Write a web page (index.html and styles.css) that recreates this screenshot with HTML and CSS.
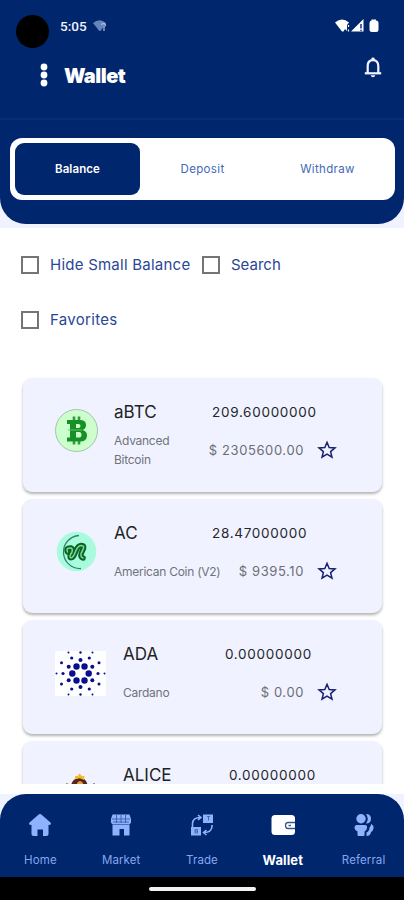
FILE: index.html
```html
<!DOCTYPE html>
<html lang="en">
<head>
    <meta charset="UTF-8">
    <meta name="viewport" content="width=device-width, initial-scale=1.0">
    <title>Wallet</title>
    <link rel="stylesheet" href="styles.css">
</head>
<body>
    <div class="app">
        <div class="header-wrap">
            <header class="header">
                <div class="topbar">
                    <div class="status">
                        <span class="camera"></span>
                        <span class="time">5:05</span>
                        <svg class="wifi-dim" width="15" height="13" viewBox="0 0 15 13">
                            <path d="M0 3Q6.500-2.500 13 3L8 10.500Q6.500 11.500 5.500 10Z" fill="#6484be"/>
                            <path d="M8.500 5Q8.500 3.500 10.300 3.500T12.500 5Q12.500 6 11 6.500V11" fill="none" stroke="#a3b6dc" stroke-width="1.300"/>
                        </svg>
                        <svg class="signals" width="44" height="14" viewBox="0 0 44 14">
                            <path d="M0 3.500Q7-2.500 14 3.500L12 6V12L10 10L8.500 12.500H7Z" fill="#fff"/>
                            <path d="M13.500 6V8M13.500 10.500V12.500" stroke="#fff" stroke-width="1.200"/>
                            <path d="M16 12.500L28.500 0V12.500Z" fill="#fff"/>
                            <path d="M26 5V9.500M26 10.700V12" stroke="#00266e" stroke-width="1.400"/>
                            <path d="M36.500 1.500V.500H41V1.500Q43.500 1.500 43.500 4V10.500Q43.500 13 41 13H37Q34.500 13 34.500 10.500V4Q34.500 1.500 36.500 1.500Z" fill="#fff"/>
                        </svg>
                    </div>
                    <div class="title-row">
                        <svg width="8" height="24" viewBox="0 0 8 24" fill="#fff">
                            <circle cx="4" cy="4" r="3.400"/>
                            <circle cx="4" cy="12" r="3.400"/>
                            <circle cx="4" cy="20" r="3.400"/>
                        </svg>
                        <h1>Wallet</h1>
                        <svg class="bell" width="18" height="21" viewBox="0 0 18 21">
                            <path d="M3.700 16V9Q3.700 3.200 9 3.200T14.300 9V16" fill="none" stroke="#f4f4ff" stroke-width="2.200"/>
                            <path d="M.800 16.300H17.200" stroke="#f4f4ff" stroke-width="2.200"/>
                            <path d="M7.300 3V1.800Q7.300.500 9 .500T10.700 1.800V3ZM6.800 18.200H11.200Q11 20.200 9 20.200T6.800 18.200Z" fill="#f4f4ff"/>
                        </svg>
                    </div>
                </div>
                <div class="tabs">
                    <button class="tab active">Balance</button>
                    <button class="tab">Deposit</button>
                    <button class="tab">Withdraw</button>
                </div>
            </header>
        </div>

        <div class="filters">
            <label><span class="box"></span><span class="hide-small">Hide Small Balance</span></label>
            <label><span class="box"></span><span class="search">Search</span></label>
            <label><span class="box"></span><span class="favorites">Favorites</span></label>
        </div>

        <main class="coins">
            <article class="card">
                <svg class="coin-icon" width="43" height="43" viewBox="0 0 43 43">
                    <circle cx="21.500" cy="21.500" r="21" fill="#ccffcb" stroke="#a5c2aa"/>
                    <path d="M12 11H25Q31 11 31 16Q31 20 27.500 21Q32 22 32 26.500Q32 32.500 25 32.500H12V28.500H15V15H12ZM21 15V19H23.500Q25.500 19 25.500 17T23.500 15ZM21 23V28.500H24Q26.500 28.500 26.500 25.700T24 23Z" fill="#159126" fill-rule="evenodd"/>
                    <path d="M19 11V7.500M24 11V7.500M19 32V35.500M24 32V35.500" stroke="#2e9c3c" stroke-width="2.600"/>
                    <path d="M13 21H27" stroke="#6abf70" stroke-width="1"/>
                </svg>
                <div class="info">
                    <div class="row">
                        <span class="symbol">aBTC</span>
                        <span class="amount">209.60000000</span>
                    </div>
                    <div class="row sub">
                        <span class="name">Advanced<br>Bitcoin</span>
                        <span class="value">$ 2305600.00</span>
                        <svg class="star" viewBox="0 0 20 20"><path d="M10 2.300L12.200 7.500L18 7.900L13.600 11.600L15 17.200L10 14.200L5 17.200L6.400 11.600L2 7.900L7.800 7.500Z"/></svg>
                    </div>
                </div>
            </article>

            <article class="card">
                <svg class="coin-icon" width="43" height="43" viewBox="0 0 43 43">
                    <circle cx="21.500" cy="21.500" r="19.800" fill="#a8fbdc"/>
                    <path d="M24 5.500A16.500 16.500 0 1 0 26 38.500" fill="none" stroke="#34816f" stroke-width="1.300"/>
                    <path d="M12.500 22Q10.500 17.500 16 18Q19 19.500 15.500 24.500Q14 28.500 17 27.500C21 25.500 20 16 26 15.500Q30.500 15.500 27.500 20.500Q24 26.500 28 28" fill="none" stroke="#086526" stroke-width="5.500" stroke-linecap="round"/>
                    <path d="M12.500 22Q10.500 17.500 16 18Q19 19.500 15.500 24.500Q14 28.500 17 27.500C21 25.500 20 16 26 15.500Q30.500 15.500 27.500 20.500Q24 26.500 28 28" fill="none" stroke="#7fd692" stroke-width="1.500" stroke-linecap="round"/>
                </svg>
                <div class="info">
                    <div class="row">
                        <span class="symbol">AC</span>
                        <span class="amount">28.47000000</span>
                    </div>
                    <div class="row sub">
                        <span class="name">American Coin (V2)</span>
                        <span class="value">$ 9395.10</span>
                        <svg class="star" viewBox="0 0 20 20"><path d="M10 2.300L12.200 7.500L18 7.900L13.600 11.600L15 17.200L10 14.200L5 17.200L6.400 11.600L2 7.900L7.800 7.500Z"/></svg>
                    </div>
                </div>
            </article>

            <article class="card wide-icon">
                <svg class="coin-icon" width="51" height="45" viewBox="0 0 51 45">
                    <path d="M0 0H51V45H0Z" fill="#fff"/>
                    <g fill="#080e8e">
                        <circle cx="21.500" cy="15.500" r="3.200"/><circle cx="29.500" cy="15.500" r="3.200"/>
                        <circle cx="17.300" cy="22.500" r="3.200"/><circle cx="33.700" cy="22.500" r="3.200"/>
                        <circle cx="21.500" cy="29.500" r="3.200"/><circle cx="29.500" cy="29.500" r="3.200"/>
                        <circle cx="25.500" cy="9" r="2"/><circle cx="25.500" cy="36" r="2"/>
                        <circle cx="13.700" cy="15.700" r="2"/><circle cx="37.300" cy="15.700" r="2"/>
                        <circle cx="13.700" cy="29.300" r="2"/><circle cx="37.300" cy="29.300" r="2"/>
                        <circle cx="16.700" cy="7" r="1.600"/><circle cx="34.300" cy="7" r="1.600"/>
                        <circle cx="16.700" cy="38" r="1.600"/><circle cx="34.300" cy="38" r="1.600"/>
                        <circle cx="8" cy="22.500" r="1.600"/><circle cx="43" cy="22.500" r="1.600"/>
                        <circle cx="6.500" cy="11.800" r="1.500"/><circle cx="44" cy="11.800" r="1.500"/>
                        <circle cx="6.500" cy="33" r="1.500"/><circle cx="44" cy="33" r="1.500"/>
                        <circle cx="25.500" cy="1.500" r="1.200"/><circle cx="25.500" cy="43.500" r="1.200"/>
                        <circle cx="13.500" cy="1.500" r="1"/><circle cx="37.500" cy="1.500" r="1"/>
                        <circle cx="13.500" cy="43.500" r="1"/><circle cx="37.500" cy="43.500" r="1"/>
                        <circle cx="1.500" cy="22.500" r="1"/><circle cx="49.500" cy="22.500" r="1"/>
                    </g>
                </svg>
                <div class="info">
                    <div class="row">
                        <span class="symbol">ADA</span>
                        <span class="amount">0.00000000</span>
                    </div>
                    <div class="row sub">
                        <span class="name">Cardano</span>
                        <span class="value">$ 0.00</span>
                        <svg class="star" viewBox="0 0 20 20"><path d="M10 2.300L12.200 7.500L18 7.900L13.600 11.600L15 17.200L10 14.200L5 17.200L6.400 11.600L2 7.900L7.800 7.500Z"/></svg>
                    </div>
                </div>
            </article>

            <article class="card wide-icon alice">
                <svg class="coin-icon" width="51" height="45" viewBox="0 0 51 45">
                    <path d="M16 18Q15 7 24 6T33 18Z" fill="#592614"/>
                    <path d="M20 7L20 4L22.500 4L24.500 1.500L27 4L29.500 4L29 8Q25 5 20 7Z" fill="#f3bc28"/>
                    <path d="M22 14Q21 10 25 9Q29 10 28 14Z" fill="#dba052"/>
                    <path d="M11 11.500H13M38 11.500H40" stroke="#999" stroke-width="1"/>
                </svg>
                <div class="info">
                    <div class="row">
                        <span class="symbol">ALICE</span>
                        <span class="amount">0.00000000</span>
                    </div>
                </div>
            </article>
        </main>

        <div class="nav-wrap">
            <nav class="nav">
                <a class="nav-item">
                    <svg width="24" height="24" viewBox="0 0 24 24" fill="#8fb2ff">
                        <path d="M11 1.300Q12 .500 13 1.300L22.500 9.500Q24 12 20.500 12V21Q20.500 23 18.500 23H15V16.500H9.500V23H5.500Q3.500 23 3.500 21V12Q0 12 1.500 9.500Z"/>
                    </svg>
                    <span>Home</span>
                </a>
                <a class="nav-item">
                    <svg width="24" height="24" viewBox="0 0 24 24">
                        <path d="M3.500 1.500H20.500L22 6V9.500Q21 12 19 11H5Q3 12 2 9.500V6Z" fill="#8fb2ff"/>
                        <path d="M3.500 11.500H20.500V22.500H15V16H10.500V22.500H3.500Z" fill="#8fb2ff"/>
                        <path d="M3 6H21M4 9H20M7.500 2V10M12 2V10M16.500 2V10" stroke="#3f64ae" stroke-width="1"/>
                    </svg>
                    <span>Market</span>
                </a>
                <a class="nav-item">
                    <svg width="24" height="24" viewBox="0 0 24 24">
                        <path d="M13 1.500H23V10H13ZM1 14H11V22.500H1Z" fill="#8fb2ff"/>
                        <path d="M2.500 14V10.500Q3 4.500 10 4.500M8 2L11 4.500L8 7M22 12V13.500Q21.500 19.500 14 19.500M16.500 17L13.500 19.500L16.500 22" fill="none" stroke="#8fb2ff" stroke-width="1.600"/>
                        <path d="M17 3.500H20M18.500 3.500V7.500M5 16.500H7.500V20H5ZM5 18.200H7.500" fill="none" stroke="#4468b2" stroke-width="1"/>
                    </svg>
                    <span>Trade</span>
                </a>
                <a class="nav-item active">
                    <svg width="24" height="24" viewBox="0 0 24 24">
                        <rect x=".500" y="2" width="23.500" height="20" rx="3.500" fill="#fff"/>
                        <path d="M24 9.500H17Q14.500 9.500 14.500 12.500T17 15.500H24" fill="#fff" stroke="#3b5590" stroke-width="1.300"/>
                        <path d="M17.500 12.500H20" stroke="#3b5590" stroke-width="1.400"/>
                    </svg>
                    <span>Wallet</span>
                </a>
                <a class="nav-item">
                    <svg width="24" height="24" viewBox="0 0 24 24" fill="#8fb2ff">
                        <circle cx="9" cy="5.800" r="4.700"/>
                        <path d="M14 1Q19 1 19 5.800T14 10.500Q17.500 5.800 14 1Z"/>
                        <path d="M5 12H13Q15.500 12 15 15Q14.500 18 12.500 18.500V22Q12.500 23 11.500 23H6.500Q5.500 23 5.500 22V18.500Q3 18 2.500 15Q2.500 12 5 12Z"/>
                        <path d="M19 11Q22 12 21.500 15.500Q21 18 19 19Q18.500 23 14.500 23V19.500Q17.500 18 17.500 14.500Q19 13.500 19 11Z"/>
                    </svg>
                    <span>Referral</span>
                </a>
            </nav>
        </div>
        <div class="gesture-bar"><span></span></div>
    </div>
</body>
</html>
```
FILE: styles.css
```css
* {
    box-sizing: border-box;
}
body {
    margin: 0;
    font-family: Inter, Roboto, sans-serif;
    background-color: #fff;
}
.app {
    display: flex;
    flex-direction: column;
    width: 404px;
    height: 900px;
    overflow: hidden;
}
svg {
    display: block;
    flex-shrink: 0;
}

/* header */
.header-wrap {
    height: 228px;
    background: linear-gradient(#00266e 180px, #f0f2ff 180px);
}
.header {
    height: 224px;
    background-color: #00266e;
    border-radius: 0 0 26px 26px;
}
.topbar {
    height: 120px;
    border-bottom: 2px solid #062d75;
}
.status {
    display: flex;
    align-items: flex-start;
    height: 48px;
    padding: 15px 25px 0 16px;
}
.camera {
    width: 33px;
    height: 33px;
    border-radius: 50%;
    background-color: #000;
}
.time {
    margin-left: 11px;
    margin-top: 3px;
    width: 33px;
    font-size: 13.5px;
    line-height: 17px;
    font-weight: 500;
    font-family: Roboto, sans-serif;
    color: #f1f3fb;
}
.wifi-dim {
    margin-top: 5px;
}
.signals {
    margin-left: auto;
    margin-top: 4px;
}
.title-row {
    display: flex;
    align-items: center;
    height: 54px;
    padding: 0 22px 0 40px;
}
h1 {
    margin: 2px 0 0 16px;
    font-size: 20px;
    font-weight: 900;
    letter-spacing: -0.5px;
    color: #fff;
}
.bell {
    margin-left: auto;
    margin-top: -15px;
}
.tabs {
    display: grid;
    grid-template-columns: repeat(3, 1fr);
    height: 62px;
    margin: 18px 9px 0 10px;
    padding: 5px;
    background-color: #fff;
    border-radius: 12px;
}
.tab {
    border: 0;
    border-radius: 9px;
    padding: 0 0 1px;
    background: none;
    font-family: inherit;
    font-size: 11.5px;
    letter-spacing: 0.35px;
    color: #4269b7;
}
.tab.active {
    background-color: #00266e;
    color: #fff;
    font-weight: 600;
    letter-spacing: 0.1px;
}

/* filters */
.filters {
    display: flex;
    flex-wrap: wrap;
    align-content: flex-start;
    column-gap: 12px;
    height: 147px;
    padding: 9px 21px 0;
}
.filters label {
    display: flex;
    align-items: center;
    height: 55px;
    font-size: 15px;
    color: #294795;
}
.box {
    width: 18px;
    height: 18px;
    margin-right: 11px;
    border: 2px solid #757575;
}
.hide-small {
    width: 140px;
    letter-spacing: 0.24px;
    white-space: nowrap;
}
.favorites {
    letter-spacing: 0.3px;
}

/* coin list */
.coins {
    height: 409px;
    padding: 3px 22px 0 23px;
    overflow: hidden;
}
.card {
    display: flex;
    align-items: flex-start;
    height: 114px;
    margin-bottom: 7px;
    padding: 21px 45px 0 32px;
    background-color: #f0f3ff;
    border-radius: 9px;
    box-shadow: 0 2px 3px rgba(0, 0, 0, 0.3);
}
.coin-icon {
    margin-top: 10px;
    margin-right: 16px;
}
.wide-icon .coin-icon {
    margin-right: 17px;
}
.info {
    flex: 1;
}
.row {
    display: flex;
    align-items: center;
    height: 26px;
    white-space: nowrap;
}
.sub {
    height: 40px;
    margin-top: 5px;
}
.symbol {
    width: 98px;
    font-size: 17px;
    color: #222;
}
.wide-icon .symbol {
    width: 102px;
}
.alice .symbol {
    width: 106px;
}
.amount {
    font-size: 13.5px;
    letter-spacing: 0.7px;
    color: #26262b;
}
.name {
    font-size: 12px;
    line-height: 19px;
    letter-spacing: -0.27px;
    color: #70727b;
}
.value {
    margin-left: auto;
    font-size: 13px;
    letter-spacing: 0.6px;
    color: #6c6d75;
}
.star {
    width: 20px;
    height: 20px;
    margin-left: 13px;
    fill: none;
    stroke: #18206f;
    stroke-width: 1.5;
}

/* bottom navigation */
.nav-wrap {
    margin-top: 10px;
    height: 83px;
    background-color: #eff3ff;
}
.nav {
    display: grid;
    grid-template-columns: repeat(5, 1fr);
    height: 83px;
    background-color: #00266e;
    border-radius: 26px 26px 0 0;
}
.nav-item {
    display: flex;
    flex-direction: column;
    align-items: center;
    padding-top: 19px;
    font-size: 11.5px;
    color: #86a6ec;
}
.nav-item span {
    margin-top: 14px;
    line-height: 19px;
    letter-spacing: 0.1px;
}
.nav-item.active {
    color: #fff;
    font-size: 13px;
    font-weight: 700;
}
.gesture-bar {
    flex: 1;
    display: flex;
    align-items: center;
    justify-content: center;
    background-color: #000;
}
.gesture-bar span {
    width: 107px;
    height: 4px;
    border-radius: 2px;
    background-color: #f2f2f2;
}
```
